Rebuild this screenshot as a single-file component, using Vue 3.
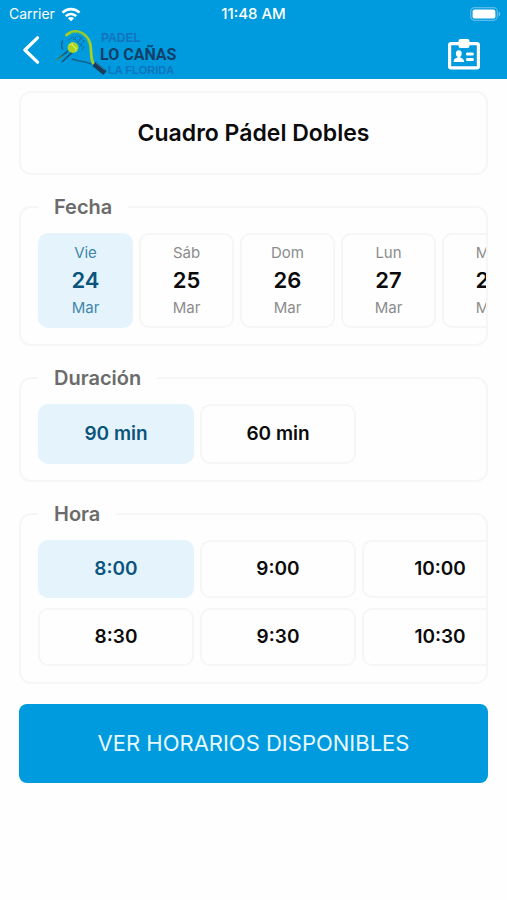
<script setup>
import { ref } from 'vue'

const dates = [
  { weekday: 'Vie', day: 24, month: 'Mar' },
  { weekday: 'Sáb', day: 25, month: 'Mar' },
  { weekday: 'Dom', day: 26, month: 'Mar' },
  { weekday: 'Lun', day: 27, month: 'Mar' },
  { weekday: 'Mar', day: 28, month: 'Mar' },
]
const durations = [90, 60]
const hours = ['8:00', '8:30', '9:00', '9:30', '10:00', '10:30']

const selectedDay = ref(24)
const selectedDuration = ref(90)
const selectedHour = ref('8:00')
</script>

<template>
  <div class="screen">
    <header class="header">
      <div class="status">
        <span class="carrier">
          Carrier
          <svg class="wifi" viewBox="0 0 20 15" width="20" height="15" aria-hidden="true">
            <g fill="none" stroke="#fff" stroke-width="2.6">
              <path d="M1.5 5.6a12.2 12.2 0 0 1 17 0" />
              <path d="M4.8 9.1a7.4 7.4 0 0 1 10.4 0" />
            </g>
            <path d="M10 14.2 6.9 11.2a4.4 4.4 0 0 1 6.2 0z" fill="#fff" />
          </svg>
        </span>
        <span class="clock">11:48 AM</span>
        <span class="battery">
          <svg viewBox="0 0 31 14" width="31" height="14" aria-hidden="true">
            <rect x=".7" y=".7" width="26.6" height="12.6" rx="3.8" fill="none" stroke="#5bbcea" stroke-width="1.2" />
            <rect x="2.6" y="2.4" width="22.8" height="9.2" rx="2.2" fill="#fff" />
            <path d="M28.7 4.6c2 .8 2 4 0 4.8z" fill="#6fc5ec" />
          </svg>
        </span>
      </div>
      <nav class="nav">
        <button class="icon-button" type="button" aria-label="Volver">
          <svg viewBox="0 0 18 28" width="18" height="28" aria-hidden="true">
            <path d="M15.5 1.8 2.9 14l12.6 12.2" fill="none" stroke="#fff" stroke-width="3.2" stroke-linecap="round" stroke-linejoin="round" />
          </svg>
        </button>
        <svg class="logo" viewBox="0 0 126 48" width="126" height="48" role="img" aria-label="Padel Lo Cañas La Florida">
          <g fill="none" stroke-linecap="round">
            <path d="M12.5 5C21-2 32 2 36 13c2 7 0 13 3 20" stroke="#a5cf22" stroke-width="2.8" />
            <path d="M17 3c8-3 16 2 17.500 10" stroke="#59b86d" stroke-width="1" />
            <path d="M18 29c8 3 14 2 19 5" stroke="#17618f" stroke-width="1.5" />
            <path d="M8.5 11c-2 4-1 6 0 8" stroke="#17618f" stroke-width="1.4" />
            <path d="M15 10l3-3m1 3 4-4m1 6 4-5m-2 9 4-5m-2 9 2-3M19 7l10 10m-4-11 5 5" stroke="#176895" stroke-width="1" stroke-dasharray="1.5 1.3" />
            <path d="M40 34 51 43" stroke="#173d5b" stroke-width="5" stroke-linecap="butt" />
            <path d="m42 33 8.500 7" stroke="#537791" stroke-width=".8" />
          </g>
          <path d="m14 20-8 6-6 6 9-5z" fill="#38986f" />
          <path d="m15 19-13 11 11-7z" fill="#18547d" />
          <path d="m18 22-10 10 11-10z" fill="#18547d" stroke="#18547d" stroke-width="1.4" />
          <circle cx="19" cy="17.500" r="5.400" fill="#a9d420" />
          <path d="M15 14.500c4 0 7 3 7 7m-4-9c0 3 2 5 5 6" fill="none" stroke="#e2ef75" stroke-width=".8" />
          <g class="logo-text">
            <text class="logo-small" x="47" y="12">PADEL</text>
            <text class="logo-large" x="46" y="30">LO CAÑAS</text>
            <text class="logo-base" x="54" y="44">LA FLORIDA</text>
          </g>
        </svg>
        <button class="icon-button account" type="button" aria-label="Mi cuenta">
          <svg viewBox="0 0 34 32" width="34" height="32" aria-hidden="true">
            <rect x="2.6" y="5.6" width="28.8" height="24.2" rx="1.6" fill="none" stroke="#fff" stroke-width="3.2" />
            <rect x="11.5" y="1" width="11" height="9" rx="2" fill="#fff" />
            <ellipse cx="11.8" cy="15.6" rx="2.9" ry="3.4" fill="#fff" />
            <path d="M10.3 18h3v1.8c2.4.5 3.6 1.500 3.800 4.300H6.500c.2-2.800 1.400-3.800 3.800-4.300z" fill="#fff" />
            <path d="M20.400 15.900h5M20.400 21.500h5" stroke="#fff" stroke-width="3" stroke-linecap="round" />
          </svg>
        </button>
      </nav>
    </header>

    <main class="content">
      <h1 class="title">Cuadro Pádel Dobles</h1>

      <fieldset class="group">
        <legend>Fecha</legend>
        <div class="track">
          <button
            v-for="d in dates"
            :key="d.day"
            type="button"
            class="chip date"
            :class="{ selected: selectedDay === d.day }"
            :aria-pressed="selectedDay === d.day"
            @click="selectedDay = d.day"
          >
            <span class="minor">{{ d.weekday }}</span>
            <span class="day">{{ d.day }}</span>
            <span class="minor">{{ d.month }}</span>
          </button>
        </div>
      </fieldset>

      <fieldset class="group">
        <legend>Duración</legend>
        <div class="track">
          <button
            v-for="m in durations"
            :key="m"
            type="button"
            class="chip duration"
            :class="{ selected: selectedDuration === m }"
            :aria-pressed="selectedDuration === m"
            @click="selectedDuration = m"
          >{{ m }} min</button>
        </div>
      </fieldset>

      <fieldset class="group">
        <legend>Hora</legend>
        <div class="track hours">
          <button
            v-for="h in hours"
            :key="h"
            type="button"
            class="chip hour"
            :class="{ selected: selectedHour === h }"
            :aria-pressed="selectedHour === h"
            @click="selectedHour = h"
          >{{ h }}</button>
        </div>
      </fieldset>

      <button class="submit" type="button">VER HORARIOS DISPONIBLES</button>
    </main>
  </div>
</template>

<style>
body {
  margin: 0;
  background: #fefefe;
}
</style>

<style scoped>
.screen {
  font-family: Inter, "Open Sans", sans-serif;
  color: #0b0b0b;
}
button {
  font-family: inherit;
  margin: 0;
  cursor: pointer;
}
.header {
  background: #009bde;
  color: #fff;
}
.status {
  display: grid;
  grid-template-columns: 1fr auto 1fr;
  align-items: center;
  height: 28px;
  padding: 0 6px;
  font-size: 14px;
  line-height: 20px;
}
.carrier {
  display: flex;
  align-items: center;
  gap: 6px;
  padding-left: 3px;
}
.clock {
  font-size: 15px;
  font-weight: 500;
}
.battery {
  display: flex;
  justify-content: flex-end;
}
.nav {
  display: flex;
  align-items: center;
  height: 51px;
  padding: 0 26px 0 22px;
}
.icon-button {
  display: flex;
  padding: 0;
  border: 0;
  background: none;
}
.nav > .icon-button:first-child {
  margin-bottom: 8px;
}
.logo {
  margin-left: 14px;
}
.logo-text {
  font-family: "Liberation Sans", sans-serif;
  font-weight: 700;
}
.logo-small {
  font-size: 12px;
  fill: #1173bd;
}
.logo-large {
  font-family: Roboto, sans-serif;
  font-size: 16px;
  fill: #123f68;
}
.logo-base {
  font-size: 11px;
  fill: #1173bd;
}
.account {
  margin-left: auto;
}
.content {
  display: flex;
  flex-direction: column;
  gap: 20px;
  padding: 12px 19px;
}
.title {
  margin: 0;
  padding: 26px 16px;
  border: 2px solid #f6f6f6;
  border-radius: 12px;
  font-size: 23px;
  font-weight: 600;
  line-height: 28px;
  text-align: center;
}
.group {
  min-width: 0;
  margin: 0;
  padding: 14px 0 16px 17px;
  border: 2px solid #f6f6f6;
  border-radius: 12px;
}
legend {
  padding: 0 16px;
  font-size: 20px;
  font-weight: 600;
  line-height: 24px;
  color: #6b6b6b;
}
.track {
  display: flex;
  gap: 6px;
  overflow-x: auto;
  scrollbar-width: none;
}
.hours {
  display: grid;
  grid-template-rows: auto auto;
  grid-auto-flow: column;
  justify-content: start;
  gap: 10px 6px;
}
.chip {
  flex: none;
  box-sizing: border-box;
  padding: 0;
  border: 2px solid #f6f6f6;
  border-radius: 10px;
  background: #fefefe;
  color: #0b0b0b;
  font-size: 19px;
  font-weight: 600;
  line-height: 24px;
}
.chip.selected {
  border-color: #e5f4fc;
  background: #e5f4fc;
  color: #0b547c;
}
.date {
  display: flex;
  flex-direction: column;
  align-items: center;
  justify-content: center;
  width: 95px;
  height: 95px;
}
.minor {
  font-size: 15px;
  font-weight: 400;
  line-height: 20px;
  color: #8c8c8c;
}
.chip.selected .minor {
  color: #3f86aa;
}
.day {
  font-size: 22px;
  line-height: 35px;
}
.duration {
  width: 156px;
  height: 60px;
}
.hour {
  width: 156px;
  height: 58px;
}
.submit {
  padding: 26px 16px;
  border: 0;
  border-radius: 8px;
  background: #009bde;
  color: #e8f9ff;
  font-size: 22px;
  font-weight: 400;
  line-height: 27px;
}
</style>
